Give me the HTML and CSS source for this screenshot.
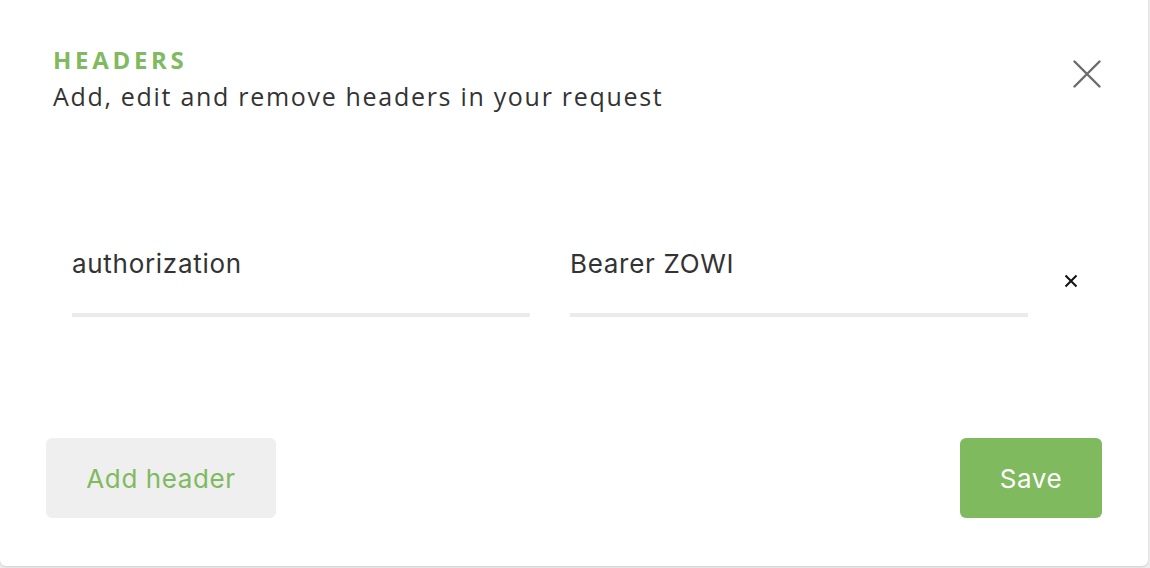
FILE: index.html
```html
<!DOCTYPE html>
<html>
<head>
<meta charset="utf-8">
<link rel="stylesheet" href="styles.css">
</head>
<body>
<div class="modal">
  <div class="head">
    <div class="titles">
      <div class="title">HEADERS</div>
      <div class="subtitle">Add, edit and remove headers in your request</div>
    </div>
    <button class="close" aria-label="Close">
      <svg width="28" height="28" viewBox="0 0 28 28"><path d="M1.5 1.5 L26.5 26.5 M26.5 1.5 L1.5 26.5" stroke="#6b6b6b" stroke-width="2.4" stroke-linecap="round" fill="none"/></svg>
    </button>
  </div>
  <div class="fields">
    <div class="field">authorization</div>
    <div class="field">Bearer ZOWI</div>
    <button class="remove" aria-label="Remove">
      <svg width="14" height="14" viewBox="0 0 14 14"><path d="M1.5 1.5 L12.5 12.5 M12.5 1.5 L1.5 12.5" stroke="#111" stroke-width="2" fill="none"/></svg>
    </button>
  </div>
  <div class="footer">
    <button class="btn add">Add header</button>
    <button class="btn save">Save</button>
  </div>
</div>
</body>
</html>
```
FILE: styles.css
```css
html, body {
  margin: 0;
  padding: 0;
  background: #ececec;
}
body {
  width: 1150px;
  height: 568px;
  overflow: hidden;
}
.modal {
  box-sizing: border-box;
  width: 1148px;
  height: 566px;
  background: #fff;
  border-radius: 0 0 6px 6px;
  box-shadow: 0 1px 2px rgba(0,0,0,0.12);
  padding: 44px 46px 0 46px;
  display: flex;
  flex-direction: column;
}
.head {
  display: flex;
  justify-content: space-between;
  align-items: flex-start;
  padding-left: 7px;
}
.title {
  font-family: "Open Sans", sans-serif;
  font-weight: 700;
  font-size: 24px;
  line-height: 32px;
  color: #80ba5f;
  letter-spacing: 3.7px;
}
.subtitle {
  font-family: "Open Sans", sans-serif;
  font-size: 25px;
  line-height: 32px;
  color: #333;
  margin-top: 4px;
  letter-spacing: 1.7px;
}
.close {
  border: 0;
  background: none;
  padding: 0;
  margin-top: 16px;
  margin-right: 1px;
  width: 28px;
  height: 28px;
  display: flex;
}
.fields {
  display: flex;
  align-items: flex-start;
  padding-left: 26px;
  margin-top: 136px;
  gap: 40px;
}
.field {
  width: 458px;
  box-sizing: border-box;
  font-family: "Inter", sans-serif;
  font-size: 26px;
  line-height: 32px;
  letter-spacing: 0.7px;
  color: #333;
  height: 69px;
  border-bottom: 4px solid #ebebeb;
}
.remove {
  border: 0;
  background: none;
  padding: 0;
  margin-left: -4px;
  margin-top: 26px;
  width: 14px;
  height: 14px;
  display: flex;
}
.footer {
  display: flex;
  justify-content: space-between;
  margin-top: 121px;
}
.btn {
  border: 0;
  height: 80px;
  border-radius: 6px;
  font-family: "Inter", sans-serif;
  font-size: 26px;
  letter-spacing: 0.6px;
  padding: 0;
}
.add {
  width: 230px;
  background: #efefef;
  color: #80ba5f;
}
.save {
  width: 142px;
  background: #80ba5f;
  color: #fff;
}
```
